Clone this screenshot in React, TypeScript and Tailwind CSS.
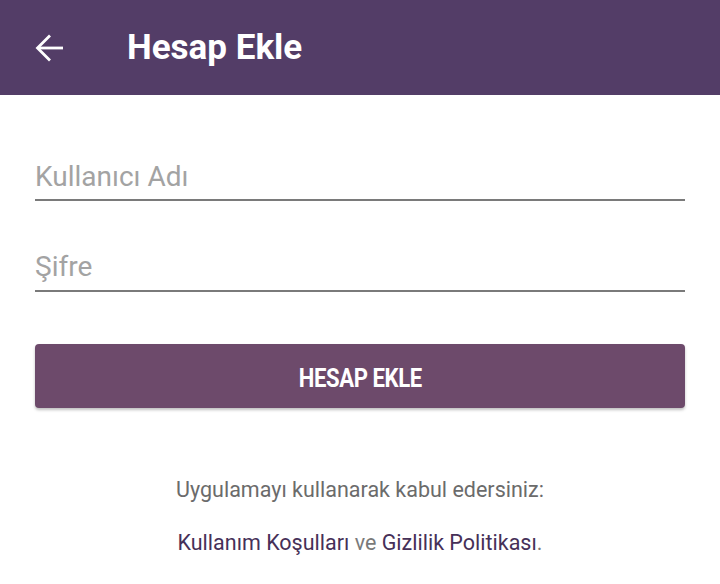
import React from "react";

export default function App() {
  return (
    <div className="w-[720px] h-[584px] bg-white overflow-hidden" style={{ fontFamily: "Roboto, 'Noto Sans', sans-serif" }}>
      <div className="h-[95px] bg-[#533d67] flex items-center pl-[35px]">
        <svg width="29" height="30" viewBox="0 0 29 30" fill="none" stroke="white" strokeWidth="2.8">
          <path d="M28 15H3.5" />
          <path d="M15 2.5L2.5 15L15 27.5" />
        </svg>
        <div className="ml-[63px] text-white font-bold text-[35px] leading-none">Hesap Ekle</div>
      </div>
      <div className="px-[35px]">
        <div className="mt-[66px] border-b-2 border-[#7a7a7a] pb-[6px]">
          <div className="text-[28px] leading-[32px] text-[#a3a3a3]">Kullanıcı Adı</div>
        </div>
        <div className="mt-[50px] border-b-2 border-[#7a7a7a] pb-[7px]">
          <div className="text-[28px] leading-[32px] text-[#a3a3a3]">Şifre</div>
        </div>
        <div className="mt-[52px] h-[64px] rounded-[4px] bg-[#6d4a6b] shadow-[0_2px_3px_rgba(0,0,0,0.25)] flex items-center justify-center">
          <span className="inline-block text-white font-bold text-[26px] leading-none tracking-[-0.5px] scale-x-[0.85] translate-y-[2px]">HESAP EKLE</span>
        </div>
        <div className="mt-[68px] text-center text-[21.5px] text-[#6b6b6b] leading-[28px]">
          Uygulamayı kullanarak kabul edersiniz:
        </div>
        <div className="mt-[25px] text-center text-[21.5px] text-[#7a7a7a] leading-[28px]">
          <span className="text-[#463058]">Kullanım Koşulları</span> ve <span className="text-[#463058]">Gizlilik Politikası</span>.
        </div>
      </div>
    </div>
  );
}
